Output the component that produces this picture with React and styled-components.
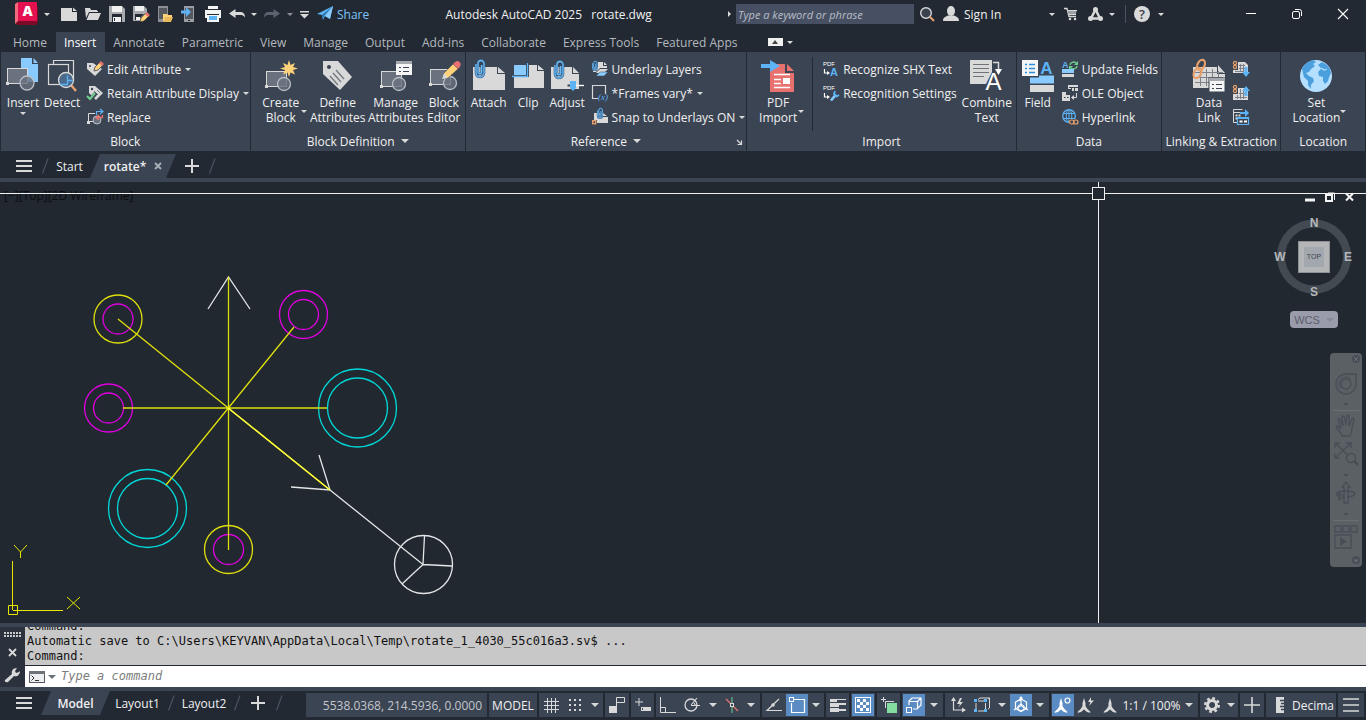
import React from 'react';
import styled, { createGlobalStyle, css } from 'styled-components';

const GlobalStyle = createGlobalStyle`
  * { box-sizing: border-box; }
  body {
    margin: 0;
    background: #222933;
    color: #f0f0f0;
    font-family: "Open Sans", "Noto Sans", sans-serif;
    font-size: 12px;
    line-height: 15px;
  }
  button, input {
    font: inherit;
    color: inherit;
    background: none;
    border: 0;
    padding: 0;
    margin: 0;
  }
  a { color: inherit; text-decoration: none; }
`;

const L = '#d9d9d9';
const B = '#8acbff';
const B2 = '#5cb3f5';
const O = '#e8a06c';
const Y = '#ffd27a';
const R = '#e8706f';
const G = '#6fd08c';
const F = '#6a7280';
const D = '#3b4453';

/* ---------- icons ---------- */

const Svg = styled.svg`
  display: block;
  flex: none;
  overflow: visible;
`;

const Icon = ({ name, w = 16, h }) => {
  const height = h || w;
  return (
    <Svg width={w} height={height} viewBox={`0 0 ${w} ${height}`} fill="none" aria-hidden="true">
      {icons[name]}
    </Svg>
  );
};

const blockShape = (x, y, cx, cy, r = 6.5) => (
  <>
    <rect x={x + 0.5} y={y + 0.5} width="20" height="15" fill={F} stroke={L} />
    <rect x={x - 1} y={y + 14} width="3" height="3" fill={L} />
    <circle cx={cx} cy={cy} r={r} fill={F} fillOpacity="0.8" stroke="#b9bec6" strokeWidth="1.3" />
  </>
);

const clip = (x, y, s = 1) => (
  <g transform={`translate(${x} ${y}) scale(${s})`}>
    <path d="M1 4v9a4 4 0 0 0 8 0V3.500a3 3 0 0 0-6 0V12a1.800 1.800 0 0 0 3.600 0V5" stroke="#2f5f8c" strokeWidth="2.600" />
    <path d="M1 4v9a4 4 0 0 0 8 0V3.500a3 3 0 0 0-6 0V12a1.800 1.800 0 0 0 3.600 0V5" stroke="#6fbcf5" strokeWidth="1.300" />
  </g>
);

const scaleMan = 'M8 0l1.500 5v3l1.500 2.500 3.500 3.500-.5.8-3-.8L8 11.500 5 14l-3 .8-.5-.8L5 10.500 6.500 8V5z';

const icons = {
  logo: (
    <>
      <path d="M3 3l-2 2v17l2 1h18l2-3V5z" fill="#7d0a26" />
      <path d="M0 2l3-2v19l-3 3z" fill="#f26a7c" />
      <rect x="3" y="0" width="19" height="19" rx="1" fill="#e51050" />
      <text x="12.500" y="14" textAnchor="middle" fontFamily="Open Sans, sans-serif" fontWeight="800" fontSize="14" fill="#fff">A</text>
    </>
  ),
  newFile: <><path d="M0 2h11v4h5v9H0z" fill={L} /><path d="M12 1.500L16 5h-4z" fill={L} /></>,
  open: <><path d="M0 2h5l1 2h6v2H4L1 12z" fill={L} /><path d="M4.500 7H16l-3 7H1.500z" fill={L} /><path d="M6 6V5h7v1" fill={L} /></>,
  save: (
    <>
      <path d="M0 0h13l3 3v13H0z" fill="#a9abae" />
      <rect x="3" y="0" width="10" height="6" fill="#f0f0f0" />
      <rect x="3" y="8" width="10" height="8" fill="#222933" />
      <rect x="4" y="11" width="8" height="5" fill="#f0f0f0" />
      <rect x="5" y="12" width="1" height="3" fill="#222933" />
    </>
  ),
  saveAs: (
    <>
      <path d="M0 0h11l3 3v5L8 15H0z" fill="#a9abae" />
      <rect x="2" y="0" width="9" height="5" fill="#f0f0f0" />
      <path d="M2 8h9l-5 5v1H2z" fill="#222933" />
      <path d="M3 11h4v3H3z" fill="#f0f0f0" />
      <path d="M7 16l1-4 5-5 3 3-5 5z" fill={Y} stroke="#222933" strokeWidth=".6" />
      <path d="M12 8l2-2 3 3-2 2z" fill={R} />
    </>
  ),
  openMobile: (
    <>
      <rect x="1" y="0" width="10" height="16" fill="#8c9096" />
      <rect x="2" y="2" width="8" height="11" fill="#55595f" />
      <path d="M6 8h4l1 1h4v2H9l-2 4H6z" fill={Y} />
      <path d="M9 11h7l-2 5H6z" fill="#e9b95c" />
    </>
  ),
  saveMobile: (
    <>
      <rect x="3" y="0" width="10" height="16" fill="#9a9da2" />
      <rect x="4" y="2" width="8" height="11" fill="#55595f" />
      <rect x="7" y="14" width="2" height="1" fill="#222933" />
      <path d="M0 4.500h5V1l5 5-5 5V7.500H0z" fill={B2} />
    </>
  ),
  print: (
    <>
      <path d="M3 0h10v3H3z" fill="#f5f5f5" />
      <path d="M0 4h16v8h-2V8H2v4H0z" fill="#f5f5f5" />
      <path d="M2 9h12v7H2z" fill="#f5f5f5" />
      <path d="M4 10h8v4H4z" fill={B2} />
    </>
  ),
  undo: <path d="M0 7.500L6.500 3v3H11c3 0 5 1.500 5 5.500C14.500 9.500 13.500 9 11 9H6.500v3z" fill={L} />,
  redo: <path d="M16 7.500L9.500 3v3H5C2 6 0 7.500 0 11.500 1.500 9.500 2.500 9 5 9h4.500v3z" fill="#5c636e" />,
  customize: <path d="M0 4h9v1.500H0zM0 7h9L4.500 11.500z" fill={L} />,
  plane: (
    <>
      <path d="M0 8L16 0l-3 13-5-3-2 4-1-5z" fill={B2} />
      <path d="M5 9L16 0 7 10l-1 4z" fill="#2d6ea8" />
      <path d="M16 0L8 10l5 3z" fill={B} />
    </>
  ),
  search: (
    <>
      <circle cx="6" cy="6" r="5.300" fill="#39414d" stroke={L} strokeWidth="1.400" />
      <path d="M9.800 9.800L14 14" stroke={O} strokeWidth="2" />
    </>
  ),
  user: <><ellipse cx="8" cy="5" rx="4" ry="5" fill={L} /><path d="M0 15c0-4 3-4.500 5-5.500h6c2 1 5 1.500 5 5.500z" fill={L} /></>,
  cart: (
    <>
      <path d="M0 1.500h3l2 8h7" stroke={L} strokeWidth="1.300" />
      <path d="M3.500 3H13l-1.500 5H5z" fill="#9da1a7" />
      <path d="M4 3.500h9M5 7.500h7" stroke={L} />
      <circle cx="6" cy="12" r="1.300" fill={L} /><circle cx="11" cy="12" r="1.300" fill={L} />
    </>
  ),
  apps: (
    <>
      <path d="M7.500 2.500L3 11.500h9z" stroke={L} strokeWidth="2.500" />
      <circle cx="7.500" cy="2.500" r="2.500" fill={L} />
      <circle cx="2.500" cy="11.500" r="2.500" fill={L} /><circle cx="12.500" cy="11.500" r="2.500" fill={L} />
    </>
  ),
  help: (
    <>
      <circle cx="8" cy="8" r="8" fill={L} />
      <text x="8" y="13" textAnchor="middle" fontFamily="Open Sans, sans-serif" fontWeight="600" fontSize="13" fill="#3a414c">?</text>
    </>
  ),
  minimize: <path d="M0 4.500h10" stroke="#fff" />,
  restore: <><rect x=".5" y="2.500" width="7" height="7" rx="1.500" stroke="#fff" /><path d="M3 .5h4.500a2 2 0 0 1 2 2V7" stroke="#fff" /></>,
  close: <path d="M0 0l10 10M10 0L0 10" stroke="#fff" strokeWidth="1.100" />,

  insert: (
    <>
      <path d="M15 1h11v6h6v18H15z" fill={B} /><path d="M27.500 1l4.500 5h-4.500z" fill={B} />
      {blockShape(1, 11, 21, 26, 7)}
    </>
  ),
  detect: (
    <>
      <path d="M8.500 7V3.500h20v20h-2" stroke={L} strokeWidth="1.200" />
      <rect x="3.500" y="7.500" width="20" height="20" stroke={L} strokeWidth="1.200" />
      <path d="M26 28l5 6" stroke={O} strokeWidth="2.400" />
      <circle cx="21" cy="23" r="7.500" fill="#4b6a8c" stroke={L} strokeWidth="1.300" />
      <path d="M15 27.500h7.500v-9M22.500 23.500h5" stroke={B2} strokeWidth="1.300" />
    </>
  ),
  createBlock: (
    <>
      {blockShape(2, 14, 20, 27)}
      <path d="M25 3l1.500 5 4.500-2-2 4 5 1.500-5 1.500 2 4.500-4.500-2L25 20l-1.500-4.500-4.500 2 2-4.500-5-1.500 5-1.500-2-4 4.500 2z" fill={Y} />
    </>
  ),
  tag: (
    <>
      <path d="M2 4h15l14 16-12 13L2 17z" fill={L} />
      <circle cx="8" cy="10" r="2" fill={D} />
      <path d="M9 19l8 9M12 16l8 9M15 13l8 9" stroke="#767b83" strokeWidth="1.400" />
    </>
  ),
  manage: (
    <>
      {blockShape(2, 14, 20, 27)}
      <rect x="17" y="4" width="16" height="14" fill="#f5f5f5" />
      <rect x="17" y="4" width="16" height="3" fill="#a5a8ad" />
      <path d="M20 10.500h2M24 10.500h6M20 14.500h2M24 14.500h6" stroke="#3b4453" strokeWidth="1.200" />
    </>
  ),
  blockEditor: (
    <>
      {blockShape(3, 12, 23, 26)}
      <path d="M15 22l2-6 9-9 5 5-10 9z" fill={Y} stroke={D} strokeWidth=".6" />
      <path d="M15 22l2-6 4 5z" fill={L} />
      <path d="M26 7l2-2a3.400 3.400 0 0 1 5 4.500l-2 2.500z" fill={R} />
    </>
  ),
  attach: <><path d="M1 10h24v7h8v16H1z" fill={L} /><path d="M26 10l7 6h-7z" fill={L} />{clip(3, 3)}</>,
  clip: (
    <>
      <path d="M18 8h8v6h7v17H3V20h15z" fill={L} /><path d="M27 8l6 5h-6z" fill={L} />
      <rect x="3" y="8" width="12" height="10" fill={B} />
      <path d="M1 19.500h15.500V6" stroke={B2} strokeWidth="1.300" />
    </>
  ),
  adjust: (
    <>
      <path d="M1 10h21v7h7v15H1z" fill={L} /><path d="M23 10l6 6h-6z" fill={L} />
      {clip(4, 4)}
      <path d="M17 28.500h17" stroke="#fff" strokeWidth="1.400" /><path d="M17 27h4v3h-4z" fill={D} stroke={L} />
      <path d="M20 24h6v7l-3 3-3-3z" fill={B2} />
    </>
  ),
  pdfImport: (
    <>
      <path d="M9 7h15v9h9v19H9z" fill={R} /><path d="M26 7l7 7h-7z" fill={R} />
      <path d="M0 7h9V3l10 6-10 6v-4H0z" fill={B2} />
      <path d="M13 17.500h16M13 22.500h7M13 26.500h7M13 30.500h16" stroke="#fff" strokeWidth="1.400" />
      <rect x="22" y="21" width="7" height="6" fill="#fff" />
    </>
  ),
  combine: (
    <>
      <path d="M0 3h22v12l-6 12H0z" fill={L} />
      <path d="M3 7.500h16M3 11.500h16M3 15.500h16M3 19.500h11" stroke="#6d7178" strokeWidth="1.200" />
      <path d="M23 5.500h5.500V13" stroke={L} strokeWidth="1.500" /><path d="M25 12h7l-3.500 6z" fill="#fff" />
      <text x="23.500" y="33" textAnchor="middle" fontFamily="Liberation Sans, sans-serif" fontSize="24" fill="#fff">A</text>
    </>
  ),
  field: (
    <>
      <rect x="1" y="3" width="16" height="16" fill="#f5f5f5" />
      <path d="M4 7.500h2M8 7.500h6M4 11.500h2M8 11.500h6M4 15.500h2M8 15.500h6" stroke="#2d8fe0" strokeWidth="1.400" />
      <text x="25.500" y="17" textAnchor="middle" fontFamily="Liberation Sans, sans-serif" fontWeight="700" fontSize="17" fill={B2}>A</text>
      <path d="M18 18.500h15v8H9v-6h9z" fill={B} />
      <rect x="9" y="28" width="24" height="7" fill={L} />
    </>
  ),
  dataLink: (
    <>
      <path d="M1 10h24v7h8v14H1z" fill={L} /><path d="M26 8l7 8h-7z" fill={L} />
      <path d="M3 15.500h28M3 20.500h28M3 25.500h28M8.500 12v17M14.500 12v17M20.500 12v17M26.500 14v15" stroke="#7c8088" />
      <g stroke={O} strokeWidth="2.200">
        <ellipse cx="9" cy="8" rx="3.500" ry="5.500" transform="rotate(25 9 8)" />
        <ellipse cx="5.500" cy="16" rx="3.500" ry="5.500" transform="rotate(25 5.500 16)" />
      </g>
      <rect x="17" y="21" width="16" height="14" fill="#f5f5f5" stroke={D} />
      <rect x="17" y="21" width="16" height="3" fill="#a5a8ad" />
      <path d="M20 27.500h2M24 27.500h6M20 31.500h2M24 31.500h6" stroke="#3b4453" strokeWidth="1.200" />
    </>
  ),
  globe: (
    <>
      <circle cx="17" cy="19" r="16" fill="#b5dfff" />
      <path d="M3 12c2-5 7-8 11-9l3 2-3 2 2 2-4 3-2 3-3 1 3 3 4 2 1 3-3 4v4l-3-4v-4l-4-4z" fill="#4a9fdc" />
      <path d="M19 8l4-3 5 3 3 4 1 4-2 4-1 4-3 3-2-3v-4l-4-1-1-4 3-3-1-2z" fill="#4a9fdc" />
      <path d="M22 11l3 2 3-1" stroke="#b5dfff" strokeWidth="1.200" />
    </>
  ),

  editAttr: (
    <>
      <path d="M0 2h6l9 6-7 7-8-7z" fill={L} /><circle cx="3" cy="5" r="1" fill={D} />
      <path d="M7 10l1-4 5-5 3 3-5 5z" fill={Y} stroke={D} strokeWidth=".8" /><path d="M12 2l2-2 3 3-2 2z" fill={R} />
    </>
  ),
  retain: (
    <>
      <path d="M2 1h6l8 7-7 7-4-4-3-3z" fill={L} /><circle cx="5" cy="4" r="1.200" fill={D} />
      <path d="M7 6l4 4M10 5l3 3" stroke="#777c84" />
      <path d="M0 11l3 4 6-7" stroke={D} strokeWidth="4" /><path d="M0 11l3 3 5-6" stroke={G} strokeWidth="2" />
    </>
  ),
  replace: (
    <>
      <path d="M8 4.500H1.500v8H7" stroke={L} /><rect x="0" y="12" width="3" height="3" fill={L} />
      <circle cx="10" cy="11" r="4" fill={F} stroke="#b9bec6" />
      <path d="M9.500 6V2.500H15M13 0l3 2.500L13 5" stroke={B2} strokeWidth="1.200" />
      <path d="M15.500 6v2.500H10M12 6L9 8.500l3 2.500" stroke={R} strokeWidth="1.300" />
    </>
  ),
  underlay: (
    <>
      <path d="M6 1h5v4h4v2H8l-4 4H1V6h5z" fill={L} /><path d="M12 1l3 3h-3z" fill={L} />
      {clip(0, 0, 0.55)}
      <path d="M8 8h8l-4 4H4z" fill={L} /><path d="M8 11h8l-4 4H4z" fill={B} stroke={D} strokeWidth=".5" />
    </>
  ),
  frames: (
    <>
      <path d="M6 13.500H.5V.5h13V9" stroke={L} strokeWidth="1.200" />
      <text x="6" y="15" fontFamily="Liberation Serif, serif" fontStyle="italic" fontSize="9" fill={B2}>(x)</text>
    </>
  ),
  snap: (
    <>
      <path d="M2 4h8v4h6v6H5v-3H2z" fill={L} /><path d="M11 4l4 3h-4z" fill={L} />
      {clip(5, -1, 0.6)}
      <rect x=".7" y="11.700" width="3" height="3" stroke={O} strokeWidth="1.400" />
    </>
  ),
  pdfText: (
    <>
      <text x="0" y="5" fontFamily="Liberation Sans, sans-serif" fontSize="6" fill="#fff">PDF</text>
      <path d="M1.500 8v4h3" stroke="#fff" strokeWidth="1.200" /><path d="M4 10l3 2-3 2z" fill="#fff" />
      <text x="7" y="15" fontFamily="Liberation Sans, sans-serif" fontWeight="700" fontSize="11" fill={B2}>A</text>
    </>
  ),
  pdfSettings: (
    <>
      <text x="0" y="5" fontFamily="Liberation Sans, sans-serif" fontSize="6" fill="#fff">PDF</text>
      <path d="M1.500 8v4h3" stroke="#fff" strokeWidth="1.200" /><path d="M4 10l3 2-3 2z" fill="#fff" />
      <path d="M8 15.500l5-6" stroke={B} strokeWidth="2.600" /><path d="M12 6l-1 3 2.500 2.500 2.500-1.500" stroke={B2} strokeWidth="1.800" />
    </>
  ),
  updateFields: (
    <>
      <text x="0" y="7" fontFamily="Liberation Sans, sans-serif" fontWeight="700" fontSize="9" fill={B2}>A</text>
      <path d="M8 4a3.500 3 0 0 1 6-2M15 5a3.500 3 0 0 1-6 2" stroke={G} strokeWidth="1.400" />
      <path d="M16 0v4h-4zM7 9V5h4z" fill={G} />
      <rect x="0" y="8" width="12" height="4" fill={B} /><rect x="0" y="13" width="12" height="3" fill={L} />
    </>
  ),
  ole: (
    <>
      <path d="M6 0h10v6H9V4H6zM0 7h4v3h4v6H0z" fill={L} />
      <path d="M7 2.500h9M9.500 3v3M12.500 3v3M2 12.500h1.500M5 12.500h1.500" stroke={D} />
      <path d="M14.500 8v4.500H11" stroke={L} /><path d="M12 10v5l-3-2.500z" fill={L} />
    </>
  ),
  hyperlink: (
    <>
      <circle cx="7" cy="7" r="6.300" stroke={B2} strokeWidth="1.300" />
      <ellipse cx="7" cy="7" rx="2.800" ry="6.300" stroke={B2} /><path d="M1 4.500h12M1 9.500h12M7 1v12" stroke={B2} />
      <path d="M7 10h9v6H7z" fill={D} />
      <rect x="7.500" y="11" width="4.500" height="4" rx="2" stroke={O} strokeWidth="1.200" /><rect x="11.500" y="11" width="4.500" height="4" rx="2" stroke={O} strokeWidth="1.200" />
    </>
  ),
  linkDown: (
    <>
      <path d="M5 1h7l3 3v8H0V9h5z" fill={L} />
      <path d="M6 4.500h6M6 7.500h6M7.500 3v8M10.500 3v8M2 10.500h8" stroke="#7c8088" />
      <circle cx="2" cy="2" r="1.600" stroke={O} strokeWidth="1.200" /><circle cx="2" cy="6" r="1.600" stroke={O} strokeWidth="1.200" />
      <path d="M11.500 6h3v5H17l-4 5-4-5h2.500z" fill={B2} />
    </>
  ),
  linkUp: (
    <>
      <path d="M5 3h10v12H0V9h5z" fill={L} />
      <path d="M2 12.500h12M6 8.500h7M7.500 4v10M10.500 4v10M4.500 10v4" stroke="#7c8088" />
      <circle cx="2" cy="2" r="1.600" stroke={O} strokeWidth="1.200" /><circle cx="2" cy="6" r="1.600" stroke={O} strokeWidth="1.200" />
      <path d="M11.500 11h3V6H17l-4-5-4 5h2.500z" fill={B2} />
    </>
  ),
  extract: (
    <>
      <path d="M4 13.500H.5V.5h9M.5 3.500h8" stroke={L} />
      <path d="M2.500 6.500h6M2.500 9.500h2" stroke={L} strokeWidth="2" strokeDasharray="2 1" />
      <path d="M7 3h5V0l4 4-4 4V5H7z" fill={B2} />
      <path d="M4.500 8.500h11v7h-11z" fill={D} stroke={B2} strokeWidth="1.200" /><path d="M4 9.500h12" stroke={B2} />
      <path d="M6.500 12.500h3M11 12.500h3" stroke="#fff" strokeWidth="2" />
    </>
  ),
  launcher: <path d="M1 1l4 4M5.500 1.500v4h-4" stroke={L} strokeWidth="1.200" />,

  menu: <path d="M0 1h16M0 6h16M0 11h16" stroke={L} strokeWidth="2" />,
  plus: <path d="M7 0v14M0 7h14" stroke={L} strokeWidth="2" />,
  tabClose: <path d="M1 1l6 6M7 1L1 7" stroke="#a7adb6" strokeWidth="2" />,
  slash: <path d="M6 .5L.5 15.500" stroke="#4a5361" strokeWidth="1.200" />,

  grips: <path d="M0 1h17M0 4h17" stroke="#c9cbce" strokeWidth="2" strokeDasharray="2 1" />,
  cmdClose: <path d="M1 1l7 7M8 1L1 8" stroke={L} strokeWidth="1.800" />,
  wrench: <path d="M0 13l7-6c-1-3 1-6 5-6l-2 3 1 2 3-1 1-1c0 4-3 6-6 5l-6 6c-2 1-4-1-3-2z" fill={L} />,
  prompt: (
    <>
      <rect x=".5" y=".5" width="15" height="11" fill="#eceef0" stroke="#55595f" />
      <rect x="0" y="0" width="16" height="3" fill="#6d7178" />
      <path d="M2.500 4.500L5 7 2.500 9.500M6 9.500h4" stroke="#333" />
    </>
  ),

  grid: <path d="M4.500 1v15M8.500 1v15M12.500 1v15M1 4.500h15M1 8.500h15M1 12.500h15" stroke={L} />,
  dots: <path d="M2 3h12M2 8h12M2 13h12" stroke={L} strokeWidth="2" strokeDasharray="2 3" />,
  infer: <><path d="M7.500 16V.5h8v5h-8" stroke={L} /><rect x="0" y="9" width="8" height="7" fill={L} /></>,
  dynInput: <><path d="M4 1v8M0 5h8" stroke={L} /><rect x="6" y="10" width="10" height="4" fill={L} /><rect x="7" y="11" width="1" height="2" fill={D} /></>,
  ortho: <path d="M.5 0v15.500H16M.5 10.500h5v5" stroke={L} />,
  polar: <><circle cx="7" cy="8" r="6" stroke={L} strokeWidth="1.300" /><path d="M7 8.500h9M7 8l6-7M10 6l1.500 2.500" stroke={L} strokeWidth="1.100" /></>,
  iso: <><path d="M2 2l12 12" stroke={R} strokeWidth="1.200" /><path d="M8 0v16" stroke={G} /><rect x="6.500" y="6.500" width="3" height="3" fill={D} stroke={L} /></>,
  track: <><path d="M13 2L1 13.500h15" stroke={L} strokeWidth="1.200" /><circle cx="7" cy="8" r="1.800" fill={L} /></>,
  osnap: <><path d="M5 2.500h10.500v13h-13V6" stroke="#fff" strokeWidth="1.200" /><rect x=".5" y=".5" width="4" height="4" stroke="#fff" /></>,
  weight: <><path d="M0 2.500h16" stroke={L} /><path d="M0 7h16" stroke={L} strokeWidth="2" /><path d="M0 2h7v3H0zM0 6h9v4H0zM0 11h9v4H0zM9 12h7v2H9z" fill={L} /></>,
  transparency: (
    <>
      <rect x=".5" y=".5" width="15" height="15" stroke="#fff" />
      <path d="M2 3.500h12M2 9.500h12" stroke="#fff" strokeWidth="3" strokeDasharray="3 3" />
      <path d="M5 6.500h9M5 12.500h9" stroke="#fff" strokeWidth="3" strokeDasharray="3 3" />
    </>
  ),
  cycling: <><path d="M2.500 0v5M0 2.500h5M4.500 11V4.500H13" stroke={L} /><rect x="6" y="6" width="10" height="10" fill="#84dca0" /></>,
  snap3d: <><path d="M3 8V4l3-3h9v7l-4 4H7M3 4.500h8.500V12M11.500 4.500L15 1" stroke="#fff" strokeWidth="1.200" /><rect x=".5" y="10.500" width="5" height="5" stroke="#fff" /></>,
  ucs: <><path d="M3.500 2v11H14" stroke={L} strokeWidth="1.200" /><path d="M1 4l2.500-4L6 4zM12 10.500l4 2.500-4 2.500z" fill={L} /><path d="M10 1L7 7h3l-2 4 5-6h-3l2-4z" fill={L} /></>,
  filter: <><path d="M2 4h9.500v10H2zM2 4l4-3h9.500v10l-4 3M11.500 4l4-3" stroke={L} /><path d="M0 2h4v4H0zM10 2h4v4h-4zM0 12h4v4H0zM10 12h4v4h-4z" fill={D} /><path d="M0 2h3v3H0zM10 2h3v3h-3zM0 12h3v3H0zM10 12h3v3h-3z" fill={B2} /></>,
  gizmo: <><path d="M8 2l5.500 3v6.500L8 14.500l-5.500-3V5zM8 0v9M8 8.500l7 4.500M8 8.500L1 13" stroke="#fff" strokeWidth="1.200" /><path d="M5 9l3-2 3 2v3l-3 2-3-2z" stroke="#fff" /><circle cx="8" cy="1" r="1.500" fill="#fff" /></>,
  annoVis: <><path d={scaleMan} fill="#fff" transform="translate(-2 1)" /><circle cx="12.500" cy="3.500" r="2.500" stroke="#fff" strokeWidth="1.200" /></>,
  annoAuto: <><path d={scaleMan} fill={L} transform="translate(-2 1)" /><path d="M13 0l-3 5h2.500L11 9l5-5.500h-3z" fill={L} /></>,
  anno: <path d={scaleMan} fill={L} transform="translate(0 1)" />,
  gear: (
    <>
      <circle cx="8" cy="8" r="4.500" stroke={L} strokeWidth="3" />
      <circle cx="8" cy="8" r="6.800" stroke={L} strokeWidth="2.400" strokeDasharray="2.800 2.540" />
    </>
  ),
  bigPlus: <path d="M8 0v16M0 8h16" stroke={L} strokeWidth="1.600" />,
  ruler: <><path d="M0 0h8v16H0z" fill={L} /><path d="M4 3.500h4M5 6.500h3M4 9.500h4M5 12.500h3" stroke={D} strokeWidth="1.300" /></>,
  thinMenu: <path d="M0 1h16M0 7h16M0 13h16" stroke={L} strokeWidth="1.600" />,

  docMin: <path d="M0 8h10" stroke="#f5f5f5" strokeWidth="3" />,
  docRestore: <><rect x="1" y="3" width="6" height="6" stroke="#f5f5f5" strokeWidth="2" /><path d="M3 1h6.500v7" stroke="#f5f5f5" /></>,
  docClose: <path d="M1 1.500l7 7M8 1.500l-7 7" stroke="#f5f5f5" strokeWidth="2" />,

  navClose: <><circle cx="4" cy="4" r="4" fill="#474e56" /><path d="M2 2l4 4M6 2L2 6" stroke="#6a6f74" /></>,
  navMenu: <><circle cx="4" cy="4" r="4" fill="#474e56" /><path d="M1.500 3.500h5L4 6.500z" fill="#6a6f74" /></>,
  wheel: <><path d="M11 1h10v10A10 10 0 1 1 11 1z" stroke="#474e56" strokeWidth="1.300" /><circle cx="11" cy="11" r="5" stroke="#474e56" strokeWidth="1.300" /><path d="M6 16a8 8 0 0 1 0-10 8 8 0 0 1 10 0" stroke="#474e56" /></>,
  hand: <path d="M7 22c-1-4-6-8-6-9s2-1 3 0l2 2L3 6c0-1.500 1.500-2 2-.5L8 12 7 3c0-1.500 2-1.500 2.300 0L11 11l1-9c.3-1.500 2-1 2 .3L14 12l3-7c.6-1.500 2.200-.8 2 .5L17 14c0 4-1 6-2 8z" stroke="#474e56" strokeWidth="1.300" />,
  zoomNav: <><path d="M1 1l16 15M17 1L1 16M1 6V1h5M12 1h5v5M1 11v5h5" stroke="#474e56" strokeWidth="1.300" /><circle cx="17" cy="16" r="4.500" fill="#5b6065" stroke="#474e56" strokeWidth="1.400" /><path d="M20 19l4 4" stroke="#474e56" strokeWidth="2.500" /></>,
  orbit: <><path d="M9 22V6H7l4-5 4 5h-2v16z" stroke="#474e56" strokeWidth="1.300" /><path d="M6 16c-8-2-5-6 5-6s13 5 1 6M4 12l5 4-5 3z" stroke="#474e56" strokeWidth="1.300" /></>,
  motion: <><path d="M1 1h6v6H1zM9 1h6v6H9zM17 1h6v6h-6zM1 10h16v13H1z" stroke="#474e56" strokeWidth="1.300" /><path d="M6 12l7 4.500L6 21z" fill="#474e56" /></>,
};

/* ---------- shared pieces ---------- */

const Caret = styled.span`
  flex: none;
  width: 0;
  height: 0;
  border: ${({ $big }) => ($big ? 4 : 3)}px solid transparent;
  border-top-color: ${({ $color }) => $color || '#d9d9d9'};
  border-bottom-width: 0;
`;

const IconButton = styled.button`
  display: flex;
  align-items: center;
  justify-content: center;
  flex: none;
  width: ${({ $w }) => $w || 24}px;
  height: 24px;
`;

const MenuButton = styled(IconButton)`
  justify-content: flex-start;
  width: 41px;
  padding-left: 16px;
`;

const Spacer = styled.div`
  flex: ${({ $w }) => ($w ? `0 0 ${$w}px` : '1 1 0')};
`;

/* ---------- title bar ---------- */

const Page = styled.div`
  display: flex;
  flex-direction: column;
  min-height: 100vh;
  overflow: hidden;
`;

const TitleBar = styled.header`
  display: flex;
  align-items: center;
  height: 28px;
`;

const QuickAccess = styled.div`
  display: flex;
  align-items: center;
  padding-left: 15px;
`;

const ShareLink = styled.a`
  display: flex;
  align-items: center;
  gap: 4px;
  margin-left: 4px;
  color: #7cc4f7;
`;

const Title = styled.h1`
  margin: 0 auto;
  font-size: 12px;
  font-weight: 400;
  white-space: pre;
`;

const SearchBox = styled.input`
  width: 178px;
  height: 20px;
  margin-left: 5px;
  padding: 0 2px;
  background: #475062;
  font-size: 11px;
  font-style: italic;
  &::placeholder { color: #b9bec8; opacity: 1; }
`;

const RightCaret = styled.span`
  border: 3px solid transparent;
  border-left-color: #d9d9d9;
  border-right-width: 0;
`;

const SignIn = styled.button`
  display: flex;
  align-items: center;
  gap: 5px;
  width: 104px;
`;

const Divider = styled.span`
  width: 1px;
  height: 18px;
  background: #4a5361;
`;

const WindowButtons = styled.div`
  display: flex;
  margin-left: 64px;
`;

/* ---------- ribbon ---------- */

const RibbonTabs = styled.nav`
  display: flex;
  align-items: flex-end;
  height: 24px;
  padding-left: 5px;
`;

const RibbonTab = styled.button`
  height: 20px;
  padding: 0 9px 0 8px;
  color: #b4b8be;
  white-space: nowrap;
  ${({ $active }) => $active && css`
    background: #3b4453;
    color: #fff;
  `}
`;

const Collapse = styled.button`
  display: flex;
  align-items: center;
  gap: 4px;
  height: 20px;
  margin-left: 21px;
`;

const CollapseFace = styled.span`
  display: flex;
  justify-content: center;
  width: 15px;
  padding: 2px 0;
  background: #f0f0f0;
`;

const UpCaret = styled(Caret)`
  border-width: 0 3px 4px;
  border-bottom-color: #444;
`;

const Ribbon = styled.section`
  display: flex;
  height: 99px;
  margin-left: 1px;
  background: #3b4453;
`;

const Panel = styled.section`
  display: flex;
  flex-direction: column;
  flex: ${({ $size }) => $size} 1 0;
  min-width: 0;
  border-right: 1px solid #222933;
`;

const PanelBody = styled.div`
  display: flex;
  flex: 1;
  padding: 5px 0 0 ${({ $left }) => $left}px;
`;

const PanelTitle = styled.h2`
  display: flex;
  align-items: center;
  justify-content: center;
  gap: 6px;
  margin: 0;
  height: 20px;
  font-size: 12px;
  font-weight: 400;
  white-space: nowrap;
`;

const Launcher = styled.button`
  position: absolute;
  right: 4px;
  bottom: 6px;
`;

const LauncherPanel = styled(Panel)`
  position: relative;
`;

const BigButton = styled.button`
  display: flex;
  flex-direction: column;
  align-items: center;
  flex: none;
  gap: 2px;
  width: ${({ $w }) => $w}px;
  height: 72px;
  white-space: nowrap;
`;

const SideCaret = styled(Caret)`
  margin-top: 53px;
`;

const Rows = styled.div`
  display: flex;
  flex-direction: column;
  flex: none;
  margin-left: ${({ $gap }) => $gap}px;
`;

const RowButton = styled.button`
  display: flex;
  align-items: center;
  height: 24px;
  gap: 4px;
  white-space: nowrap;
`;

const PanelRule = styled.span`
  width: 1px;
  height: 74px;
  margin-left: 8px;
  background: #222933;
`;

const Big = ({ icon, w, children, caret }) => (
  <BigButton $w={w}>
    <Icon name={icon} w={34} h={36} />
    <span>{children}</span>
    {caret && <Caret />}
  </BigButton>
);

const Row = ({ icon, children, caret }) => (
  <RowButton>
    <Icon name={icon} />
    {children}
    {caret && <Caret />}
  </RowButton>
);

/* ---------- file and layout tabs ---------- */

const FileTabs = styled.nav`
  display: flex;
  align-items: flex-end;
  height: 31px;
  border-bottom: 4px solid #3b4453;
`;

const TabButton = styled.button`
  display: flex;
  align-items: center;
  justify-content: center;
  gap: 8px;
  height: 24px;
  width: ${({ $w }) => $w}px;
  ${({ $active }) => $active && css`
    background: #3b4453;
    font-weight: 600;
    clip-path: polygon(10px 0, 100% 0, calc(100% - 10px) 100%, 0 100%);
  `}
`;

/* ---------- drawing area ---------- */

const Viewport = styled.main`
  position: relative;
  flex: 1;
  min-height: 441px;
  background: #212830;
`;

const Drawing = styled.svg`
  position: absolute;
  inset: 0;
  width: 100%;
  height: 100%;
`;

const ViewLabel = styled.div`
  padding: 6px 4px;
  color: #0b0e12;
`;

const DocButtons = styled.div`
  position: absolute;
  top: 10px;
  right: 12px;
  display: flex;
  gap: 10px;
`;

const ViewCube = styled.div`
  position: absolute;
  top: 34px;
  right: 12px;
  display: grid;
  justify-items: center;
  gap: 14px;
`;

const WcsButton = styled.button`
  display: flex;
  align-items: center;
  justify-content: center;
  gap: 6px;
  width: 48px;
  height: 17px;
  border-radius: 4px;
  background: #9a9cab;
  color: #5b5e6b;
  font: 11px "Liberation Sans", sans-serif;
`;

const NavBar = styled.div`
  position: absolute;
  top: 171px;
  right: 4px;
  display: flex;
  flex-direction: column;
  align-items: center;
  width: 32px;
  height: 214px;
  padding: 2px 2px 3px;
  border-radius: 4px;
  background: #5b6065;
`;

const NavCorner = styled.button`
  align-self: flex-end;
  height: 8px;
`;

const NavButton = styled.button`
  display: flex;
  flex-direction: column;
  align-items: center;
  gap: 8px;
  margin-top: ${({ $gap }) => $gap}px;
`;

const NavRule = styled.span`
  width: 26px;
  height: 1px;
  margin-top: 4px;
  background: #6a6f74;
`;

/* ---------- command line ---------- */

const Command = styled.section`
  display: grid;
  grid-template-columns: 25px 1fr;
  border-top: 4px solid #3b4453;
  border-bottom: 4px solid #3b4453;
`;

const CommandTools = styled.div`
  display: flex;
  flex-direction: column;
  align-items: center;
  justify-content: space-between;
  padding: 5px 0 4px;
  background: #2b323e;
`;

const CommandMain = styled.div`
  font-family: "DejaVu Sans Mono", monospace;
`;

const History = styled.div`
  display: flex;
  flex-direction: column;
  justify-content: flex-end;
  height: 38px;
  padding: 0 2px 1px;
  overflow: hidden;
  background: #c8c8c8;
  color: #111;
  white-space: pre;
`;

const HistoryLine = styled.div`
  flex: none;
`;

const Prompt = styled.label`
  display: flex;
  align-items: center;
  gap: 3px;
  height: 22px;
  padding-left: 4px;
  border-top: 1px solid #222933;
  background: #fff;
`;

const PromptInput = styled.input`
  flex: 1;
  padding-left: 2px;
  color: #222;
  font-style: italic;
  &::placeholder { color: #7d7d7d; opacity: 1; }
`;

/* ---------- status bar ---------- */

const StatusBar = styled.footer`
  display: flex;
  align-items: flex-start;
  height: 29px;
`;

const StatusTabs = styled.nav`
  display: flex;
  align-items: center;
  height: 24px;
`;

const StatusTools = styled.div`
  display: flex;
  gap: 2px;
  flex: 1;
  padding-top: 2px;
`;

const Group = styled.div`
  display: flex;
  align-items: center;
  justify-content: ${({ $end }) => ($end ? 'flex-end' : 'center')};
  flex: none;
  height: 24px;
  width: ${({ $w }) => $w}px;
  padding: 0 ${({ $end }) => ($end ? 5 : 0)}px;
  overflow: hidden;
  background: #3b4453;
  color: ${({ $end }) => ($end ? '#c3c6cb' : '#f0f0f0')};
  white-space: nowrap;
`;

const Tool = styled.button`
  display: flex;
  align-items: center;
  justify-content: center;
  flex: none;
  width: ${({ $w }) => $w || 24}px;
  height: 22px;
  background: ${({ $on }) => ($on ? '#5b8bc3' : 'none')};
`;

const ToolCaret = ({ w = 16 }) => (
  <Tool $w={w} aria-label="Options"><Caret $big /></Tool>
);

const ribbonTabs = ['Home', 'Insert', 'Annotate', 'Parametric', 'View', 'Manage', 'Output', 'Add-ins', 'Collaborate', 'Express Tools', 'Featured Apps'];

const quick = [
  ['newFile', 'New'],
  ['open', 'Open'],
  ['save', 'Save'],
  ['saveAs', 'Save As'],
  ['openMobile', 'Open from Web'],
  ['saveMobile', 'Save to Web'],
  ['print', 'Plot'],
];

// circles: cx, cy, r, colour
const yellow = '#dede0c';
const magenta = '#e000e0';
const cyan = '#00d8d8';
const white = '#e4e5e6';
const circles = [
  [118, 137, 24, yellow], [118, 137, 15, magenta],
  [303.5, 132.5, 24, magenta], [303.5, 132.5, 15, magenta],
  [108.5, 226, 24, magenta], [108.5, 226, 15, magenta],
  [357.5, 226, 39, cyan], [357.5, 226, 30, cyan],
  [147.5, 326.5, 39, cyan], [147.5, 326.5, 30, cyan],
  [228.5, 367.5, 24, yellow], [228.5, 367.5, 15, magenta],
  [423.5, 382.5, 29, white],
];

const Model = () => (
  <Drawing fill="none" strokeWidth="1.3">
    {circles.map(([cx, cy, r, stroke], i) => (
      <circle key={i} cx={cx} cy={cy} r={r} stroke={stroke} />
    ))}
    <path d="M208 127l20.500-32 21.500 32M319 273l11 35-39-3M330 308l93 74.500 1.500-28.500M423 382.500l29 1.500M423 382.500L402 402" stroke={white} />
    <path d="M228.500 95v273M123 226h204M294 145L166 303M118 137l212 171" stroke={yellow} />
    <path d="M228 226l102 82" stroke="#ffff40" />
    <path d="M12.500 379v49M17 428.500h46M13 428.500h4M8.500 423.500h9v9h-9zM14 363l6.500 7v6M27 363l-6.500 7M67 415l13 12M80 415L67 427" stroke="#e6e600" strokeWidth="1" />
    <g stroke="#f0f0f0" strokeWidth="1">
      <line x1="0" x2="1092" y1="11.500" y2="11.500" />
      <line x1="1105" x2="100%" y1="11.500" y2="11.500" />
      <line x1="1098.500" x2="1098.500" y1="0" y2="5" />
      <line x1="1098.500" x2="1098.500" y1="18" y2="100%" />
      <rect x="1092.500" y="5.500" width="12" height="12" />
    </g>
  </Drawing>
);

const Compass = () => (
  <Svg width="80" height="81" viewBox="0 0 80 81" fontFamily="Liberation Sans, sans-serif" textAnchor="middle">
    <circle cx="40" cy="40.500" r="33" fill="none" stroke="#434a52" strokeWidth="8" />
    <rect x="24.500" y="25.500" width="31" height="31" fill="#b4b5b7" stroke="#8e9093" />
    <rect x="30" y="31" width="20" height="20" fill="#a3a8ae" />
    <text x="40" y="43" fontSize="7" fill="#3c434b">TOP</text>
    <g fontSize="12" fontWeight="700" fill="#b4b7ba">
      <text x="40" y="11">N</text>
      <text x="40" y="80">S</text>
      <text x="6" y="45">W</text>
      <text x="74" y="45">E</text>
    </g>
  </Svg>
);

const App = () => (
  <Page>
    <GlobalStyle />
    <TitleBar>
      <QuickAccess>
        <Icon name="logo" w={24} h={24} />
        <IconButton $w={15} aria-label="Application menu"><Caret /></IconButton>
        <Spacer $w={3} />
        {quick.map(([icon, label]) => (
          <IconButton key={icon} aria-label={label}><Icon name={icon} /></IconButton>
        ))}
        <IconButton aria-label="Undo"><Icon name="undo" /></IconButton>
        <IconButton $w={10} aria-label="Undo list"><Caret /></IconButton>
        <IconButton $w={26} aria-label="Redo"><Icon name="redo" /></IconButton>
        <IconButton $w={10} aria-label="Redo list"><Caret $color="#8b9098" /></IconButton>
        <IconButton $w={18} aria-label="Customize"><Icon name="customize" w={9} h={14} /></IconButton>
        <ShareLink href="#share"><Icon name="plane" />Share</ShareLink>
      </QuickAccess>
      <Title>{'Autodesk AutoCAD 2025   rotate.dwg'}</Title>
      <RightCaret />
      <SearchBox aria-label="Search" placeholder="Type a keyword or phrase" />
      <IconButton $w={26} aria-label="Search"><Icon name="search" w={14} /></IconButton>
      <Spacer $w={3} />
      <SignIn><Icon name="user" />Sign In</SignIn>
      <IconButton $w={10} aria-label="Account"><Caret /></IconButton>
      <IconButton $w={26} aria-label="Store"><Icon name="cart" w={13} h={14} /></IconButton>
      <IconButton aria-label="Autodesk apps"><Icon name="apps" w={15} h={14} /></IconButton>
      <IconButton $w={10} aria-label="Apps list"><Caret /></IconButton>
      <Spacer $w={8} />
      <Divider />
      <IconButton $w={32} aria-label="Help"><Icon name="help" /></IconButton>
      <IconButton $w={6} aria-label="Help list"><Caret /></IconButton>
      <WindowButtons>
        <IconButton $w={46} aria-label="Minimize"><Icon name="minimize" w={10} /></IconButton>
        <IconButton $w={46} aria-label="Restore"><Icon name="restore" w={10} /></IconButton>
        <IconButton $w={46} aria-label="Close"><Icon name="close" w={10} /></IconButton>
      </WindowButtons>
    </TitleBar>

    <RibbonTabs>
      {ribbonTabs.map((tab) => (
        <RibbonTab key={tab} $active={tab === 'Insert'}>{tab}</RibbonTab>
      ))}
      <Collapse aria-label="Collapse ribbon">
        <CollapseFace><UpCaret /></CollapseFace>
        <Caret />
      </Collapse>
    </RibbonTabs>

    <Ribbon>
      <Panel $size={250}>
        <PanelBody $left={2}>
          <Big icon="insert" w={40} caret>Insert</Big>
          <Big icon="detect" w={38}>Detect</Big>
          <Rows $gap={6}>
            <Row icon="editAttr" caret>Edit Attribute</Row>
            <Row icon="retain" caret>Retain Attribute Display</Row>
            <Row icon="replace">Replace</Row>
          </Rows>
        </PanelBody>
        <PanelTitle>Block</PanelTitle>
      </Panel>
      <Panel $size={215}>
        <PanelBody $left={10}>
          <Big icon="createBlock" w={40}>Create<br />Block</Big>
          <SideCaret />
          <Spacer $w={3} />
          <Big icon="tag" w={56}>Define<br />Attributes</Big>
          <Spacer $w={2} />
          <Big icon="manage" w={56}>Manage<br />Attributes</Big>
          <Big icon="blockEditor" w={40}>Block<br />Editor</Big>
        </PanelBody>
        <PanelTitle>Block Definition <Caret $big /></PanelTitle>
      </Panel>
      <LauncherPanel $size={282}>
        <PanelBody $left={3}>
          <Big icon="attach" w={40}>Attach</Big>
          <Big icon="clip" w={39}>Clip</Big>
          <Big icon="adjust" w={39}>Adjust</Big>
          <Rows $gap={5}>
            <Row icon="underlay">Underlay Layers</Row>
            <Row icon="frames" caret>*Frames vary*</Row>
            <Row icon="snap" caret>Snap to Underlays ON</Row>
          </Rows>
        </PanelBody>
        <PanelTitle>Reference <Caret $big /></PanelTitle>
        <Launcher aria-label="Reference options"><Icon name="launcher" w={6} /></Launcher>
      </LauncherPanel>
      <Panel $size={270}>
        <PanelBody $left={11}>
          <Big icon="pdfImport" w={40}>PDF<br />Import</Big>
          <SideCaret />
          <PanelRule />
          <Rows $gap={10}>
            <Row icon="pdfText">Recognize SHX Text</Row>
            <Row icon="pdfSettings">Recognition Settings</Row>
          </Rows>
          <Spacer />
          <Big icon="combine" w={58}>Combine<br />Text</Big>
        </PanelBody>
        <PanelTitle>Import</PanelTitle>
      </Panel>
      <Panel $size={145}>
        <PanelBody $left={2}>
          <Big icon="field" w={38}>Field</Big>
          <Rows $gap={5}>
            <Row icon="updateFields">Update Fields</Row>
            <Row icon="ole">OLE Object</Row>
            <Row icon="hyperlink">Hyperlink</Row>
          </Rows>
        </PanelBody>
        <PanelTitle>Data</PanelTitle>
      </Panel>
      <Panel $size={119}>
        <PanelBody $left={27}>
          <Big icon="dataLink" w={40}>Data<br />Link</Big>
          <Rows $gap={4}>
            <RowButton aria-label="Download from source"><Icon name="linkDown" /></RowButton>
            <RowButton aria-label="Upload to source"><Icon name="linkUp" /></RowButton>
            <RowButton aria-label="Extract data"><Icon name="extract" /></RowButton>
          </Rows>
        </PanelBody>
        <PanelTitle>Linking &amp; Extraction</PanelTitle>
      </Panel>
      <Panel $size={84}>
        <PanelBody $left={11}>
          <Big icon="globe" w={48}>Set<br />Location</Big>
          <SideCaret />
        </PanelBody>
        <PanelTitle>Location</PanelTitle>
      </Panel>
    </Ribbon>

    <FileTabs>
      <MenuButton aria-label="Menu"><Icon name="menu" w={16} h={12} /></MenuButton>
      <IconButton $w={8} as="span"><Icon name="slash" w={6} h={16} /></IconButton>
      <TabButton $w={41}>Start</TabButton>
      <TabButton $w={86} $active>rotate*<Icon name="tabClose" w={8} /></TabButton>
      <IconButton $w={31} aria-label="New tab"><Icon name="plus" w={14} /></IconButton>
      <IconButton $w={10} as="span"><Icon name="slash" w={6} h={16} /></IconButton>
    </FileTabs>

    <Viewport>
      <ViewLabel>[−][Top][2D Wireframe]</ViewLabel>
      <Model />
      <DocButtons>
        <button aria-label="Minimize drawing"><Icon name="docMin" w={10} /></button>
        <button aria-label="Restore drawing"><Icon name="docRestore" w={10} /></button>
        <button aria-label="Close drawing"><Icon name="docClose" w={9} h={10} /></button>
      </DocButtons>
      <ViewCube>
        <Compass />
        <WcsButton>WCS <Caret $big $color="#85889a" /></WcsButton>
      </ViewCube>
      <NavBar>
        <NavCorner aria-label="Close bar"><Icon name="navClose" w={8} /></NavCorner>
        <NavButton $gap={10} aria-label="Wheel"><Icon name="wheel" w={22} /><Caret $color="#474e56" /></NavButton>
        <NavRule />
        <NavButton $gap={3} aria-label="Pan"><Icon name="hand" w={22} h={24} /></NavButton>
        <NavButton $gap={4} aria-label="Zoom"><Icon name="zoomNav" w={24} h={24} /><Caret $color="#474e56" /></NavButton>
        <NavButton $gap={4} aria-label="Orbit"><Icon name="orbit" w={22} h={24} /><Caret $color="#474e56" /></NavButton>
        <NavRule />
        <NavButton $gap={4} aria-label="Motion"><Icon name="motion" w={24} /></NavButton>
        <Spacer />
        <NavCorner aria-label="Bar options"><Icon name="navMenu" w={8} /></NavCorner>
      </NavBar>
    </Viewport>

    <Command>
      <CommandTools>
        <Icon name="grips" w={17} h={5} />
        <button aria-label="Close command line"><Icon name="cmdClose" w={9} /></button>
        <button aria-label="Customize command line"><Icon name="wrench" w={16} /></button>
      </CommandTools>
      <CommandMain>
        <History>
          <HistoryLine>Command:</HistoryLine>
          <HistoryLine>{'Automatic save to C:\\Users\\KEYVAN\\AppData\\Local\\Temp\\rotate_1_4030_55c016a3.sv$ ...'}</HistoryLine>
          <HistoryLine>Command:</HistoryLine>
        </History>
        <Prompt>
          <Icon name="prompt" w={16} h={12} />
          <Caret $big $color="#6d7178" />
          <PromptInput aria-label="Command" placeholder="Type a command" />
        </Prompt>
      </CommandMain>
    </Command>

    <StatusBar>
      <StatusTabs>
        <MenuButton aria-label="Layout menu"><Icon name="menu" w={16} h={12} /></MenuButton>
        <TabButton $w={69} $active>Model</TabButton>
        <TabButton $w={55}>Layout1</TabButton>
        <IconButton $w={12} as="span"><Icon name="slash" w={6} h={16} /></IconButton>
        <TabButton $w={54}>Layout2</TabButton>
        <IconButton $w={12} as="span"><Icon name="slash" w={6} h={16} /></IconButton>
        <IconButton $w={30} aria-label="New layout"><Icon name="plus" w={14} /></IconButton>
        <IconButton $w={12} as="span"><Icon name="slash" w={6} h={16} /></IconButton>
      </StatusTabs>
      <Spacer $w={21} />
      <StatusTools>
        <Group $w={181} $end>5538.0368, 214.5936, 0.0000</Group>
        <Group $w={48}>MODEL</Group>
        <Group $w={64}>
          <Tool aria-label="Grid"><Icon name="grid" /></Tool>
          <Tool aria-label="Snap"><Icon name="dots" /></Tool>
          <ToolCaret />
        </Group>
        <Group $w={24}><Tool aria-label="Infer constraints"><Icon name="infer" /></Tool></Group>
        <Group $w={23}><Tool aria-label="Dynamic input"><Icon name="dynInput" /></Tool></Group>
        <Group $w={104}>
          <Tool aria-label="Ortho"><Icon name="ortho" /></Tool>
          <Tool aria-label="Polar tracking"><Icon name="polar" /></Tool>
          <ToolCaret w={18} />
          <Tool $w={20} aria-label="Isometric"><Icon name="iso" /></Tool>
          <ToolCaret w={18} />
        </Group>
        <Group $w={62}>
          <Tool aria-label="Object tracking"><Icon name="track" /></Tool>
          <Tool $w={22} $on aria-label="Object snap"><Icon name="osnap" /></Tool>
          <ToolCaret />
        </Group>
        <Group $w={23}><Tool aria-label="Lineweight"><Icon name="weight" /></Tool></Group>
        <Group $w={24}><Tool $w={22} $on aria-label="Transparency"><Icon name="transparency" /></Tool></Group>
        <Group $w={23}><Tool aria-label="Selection cycling"><Icon name="cycling" /></Tool></Group>
        <Group $w={41}>
          <Tool $w={22} $on aria-label="3D object snap"><Icon name="snap3d" /></Tool>
          <ToolCaret w={18} />
        </Group>
        <Group $w={104}>
          <Tool aria-label="Dynamic UCS"><Icon name="ucs" /></Tool>
          <Tool aria-label="Selection filter"><Icon name="filter" /></Tool>
          <ToolCaret />
          <Tool $w={22} $on aria-label="Gizmo"><Icon name="gizmo" /></Tool>
          <ToolCaret />
        </Group>
        <Group $w={147}>
          <Tool $w={22} $on aria-label="Annotation visibility"><Icon name="annoVis" /></Tool>
          <Tool aria-label="Autoscale"><Icon name="annoAuto" /></Tool>
          <Tool aria-label="Annotation scale"><Icon name="anno" /></Tool>
          <button>1:1 / 100%</button>
          <ToolCaret />
        </Group>
        <Group $w={38}>
          <Tool aria-label="Workspace"><Icon name="gear" /></Tool>
          <ToolCaret w={14} />
        </Group>
        <Group $w={24}><Tool aria-label="Annotation monitor"><Icon name="bigPlus" /></Tool></Group>
        <Group $w={70}>
          <Tool aria-label="Units"><Icon name="ruler" w={8} h={16} /></Tool>
          <button>Decima</button>
        </Group>
        <Group $w={26}><Tool aria-label="Customization"><Icon name="thinMenu" w={16} h={14} /></Tool></Group>
      </StatusTools>
    </StatusBar>
  </Page>
);

export default App;
